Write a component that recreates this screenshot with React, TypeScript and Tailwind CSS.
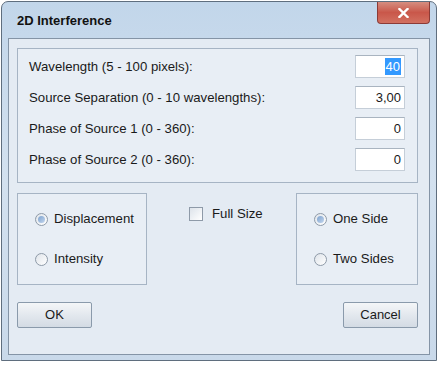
import React from 'react'

const font = { fontFamily: '"Liberation Sans", Arial, sans-serif' }

const Field = ({ label, value, selected }: { label: string; value: string; selected?: boolean }) => (
    <div className="flex items-center justify-between h-[31px]">
        <span className="text-[13.2px] text-[#1a1a1a]">{label}</span>
        <div className="w-[50px] h-[23px] bg-white border border-[#c5ced8] border-t-[#a9b4c0] flex items-center justify-end pr-[3px] text-[13px] text-[#1a1a1a]">
            {selected ? <span className="bg-[#3399ff] text-white px-[1px] leading-[17px]">{value}</span> : value}
        </div>
    </div>
)

const Radio = ({ label, checked }: { label: string; checked?: boolean }) => (
    <div className="flex items-center gap-[6px] h-[20px]">
        <div className="w-[13px] h-[13px] rounded-full border border-[#8e9aa8] bg-gradient-to-br from-[#dfe4ea] to-white flex items-center justify-center">
            {checked && <div className="w-[7px] h-[7px] rounded-full bg-gradient-to-br from-[#7da2ce] to-[#c3d6ee]" />}
        </div>
        <span className="text-[13.2px] text-[#1a1a1a]">{label}</span>
    </div>
)

const Button = ({ label }: { label: string }) => (
    <button className="w-[75px] h-[26px] border border-[#8a9aab] rounded-[2px] bg-gradient-to-b from-[#f4f6f8] via-[#e3e8ee] to-[#d3dbe4] text-[13px] text-[#1a1a1a]">
        {label}
    </button>
)

export default function App() {
    return (
        <div className="w-[440px] h-[367px] bg-white pl-[1px] pt-[1px]" style={font}>
            <div className="w-[436px] h-[360px] border border-[#5f6e7e] rounded-t-[7px] bg-gradient-to-b from-[#c2d6ea] via-[#d3e1ef] to-[#c9d9ea] flex flex-col">
                <div className="h-[36px] flex items-start justify-between pl-[15px] pr-[6px]">
                    <span className="font-bold text-[13px] text-[#111] mt-[9px]">2D Interference</span>
                    <div className="w-[53px] h-[22px] rounded-b-[4px] border border-t-0 border-[#8c3a36] bg-gradient-to-b from-[#d58d80] via-[#c9574a] to-[#d27060] flex items-center justify-center">
                        <svg width="11" height="10" viewBox="0 0 11 10">
                            <path d="M1.5 1 L9.5 9 M9.5 1 L1.5 9" stroke="#fff" strokeWidth="2.4" strokeLinecap="square" />
                        </svg>
                    </div>
                </div>
                <div className="mx-[6px] h-[317px] border border-[#8494a6] bg-[#e4ebf3] pl-[8px] pr-[11px] pt-[9px] flex flex-col">
                    <div className="border border-[#a6b4c4] bg-[#e8eef5] pl-[11px] pr-[12px] pt-[2px] h-[135px] flex flex-col">
                        <Field label="Wavelength (5 - 100 pixels):" value="40" selected />
                        <Field label="Source Separation (0 - 10 wavelengths):" value="3,00" />
                        <Field label="Phase of Source 1 (0 - 360):" value="0" />
                        <Field label="Phase of Source 2 (0 - 360):" value="0" />
                    </div>
                    <div className="flex mt-[10px]">
                        <div className="w-[130px] h-[92px] border border-[#a6b4c4] bg-[#e8eef5] pl-[17px] pt-[15px] flex flex-col gap-[20px]">
                            <Radio label="Displacement" checked />
                            <Radio label="Intensity" />
                        </div>
                        <div className="flex-1 flex items-start gap-[9px] pt-[14px] pl-[42px]">
                            <div className="w-[14px] h-[14px] border border-[#8e9aa8] bg-gradient-to-br from-[#dde3ea] to-white" />
                            <span className="text-[13.2px] text-[#1a1a1a] leading-[14px]">Full Size</span>
                        </div>
                        <div className="w-[122px] h-[92px] border border-[#a6b4c4] bg-[#e8eef5] pl-[17px] pt-[15px] flex flex-col gap-[20px]">
                            <Radio label="One Side" checked />
                            <Radio label="Two Sides" />
                        </div>
                    </div>
                    <div className="flex justify-between mt-[17px]">
                        <Button label="OK" />
                        <Button label="Cancel" />
                    </div>
                </div>
            </div>
        </div>
    )
}
